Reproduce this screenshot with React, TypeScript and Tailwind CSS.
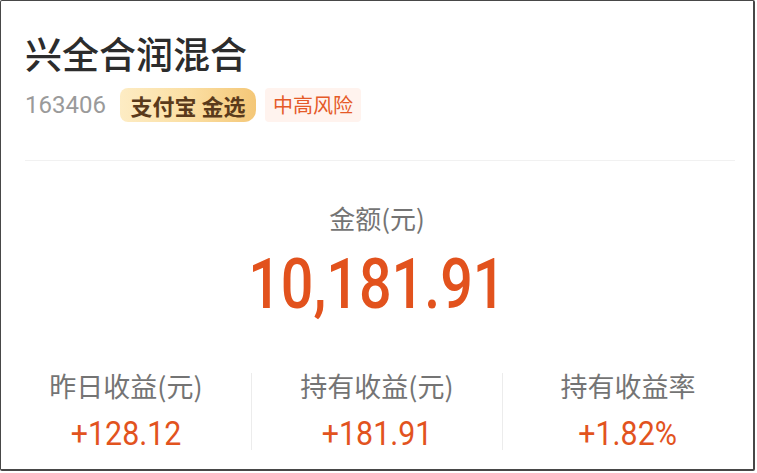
import React from "react";

const cjk = "font-['Noto_Sans_CJK_SC','Noto_Sans',sans-serif]";
const num = "font-['Roboto','Noto_Sans_CJK_SC',sans-serif]";

function Stat({ label, value }: { label: string; value: string }) {
  return (
    <div className="flex-1 flex flex-col items-center">
      <div className={`${cjk} text-[27px] leading-[32px] text-[#747474]`}>
        {label}
      </div>
      <div
        className={`${num} mt-[14px] inline-block scale-x-[0.92] text-[33px] leading-[36px] text-[#e2531e]`}
      >
        {value}
      </div>
    </div>
  );
}

export default function App() {
  return (
    <div className="w-[757px] h-[473px] bg-white">
      <div className="w-[755px] h-[471px] border-l border-t border-r-2 border-b-2 border-[#474747] rounded-[2px] bg-white flex flex-col">
        <div className="pl-[24px] pr-[18px] pt-[32px]">
          <h1
            className={`${cjk} text-[37px] leading-[40px] font-medium text-[#2c2c2c]`}
          >
            兴全合润混合
          </h1>
          <div className="mt-[15px] flex items-center h-[34px]">
            <span className={`${num} text-[24px] text-[#9a9a9a]`}>
              163406
            </span>
            <span
              className={`${cjk} ml-[14px] h-[34px] w-[136px] flex items-center justify-center rounded-l-[8px] rounded-r-[12px] bg-gradient-to-r from-[#fdecc4] via-[#fbdfa3] to-[#f4c777] text-[22px] font-bold text-[#5a3a1b]`}
            >
              支付宝 金选
            </span>
            <span
              className={`${cjk} ml-[9px] h-[34px] px-[8px] flex items-center rounded-[4px] bg-[#fff3ee] text-[20px] text-[#e55a28]`}
            >
              中高风险
            </span>
          </div>
          <div className="mt-[38px] h-px bg-[#f1f1f1]" />
        </div>
        <div className="mt-[41px] flex flex-col items-center">
          <div className={`${cjk} text-[26px] leading-[32px] text-[#747474]`}>
            金额(元)
          </div>
          <div
            className={`${num} mt-[15px] inline-block scale-x-[0.82] text-[70px] leading-[70px] font-medium text-[#e2521d]`}
          >
            10,181.91
          </div>
        </div>
        <div className="mt-[51px] flex">
          <Stat label="昨日收益(元)" value="+128.12" />
          <div className="w-px mt-[3px] h-[77px] bg-[#ececec]" />
          <Stat label="持有收益(元)" value="+181.91" />
          <div className="w-px mt-[3px] h-[77px] bg-[#ececec]" />
          <Stat label="持有收益率" value="+1.82%" />
        </div>
      </div>
    </div>
  );
}
